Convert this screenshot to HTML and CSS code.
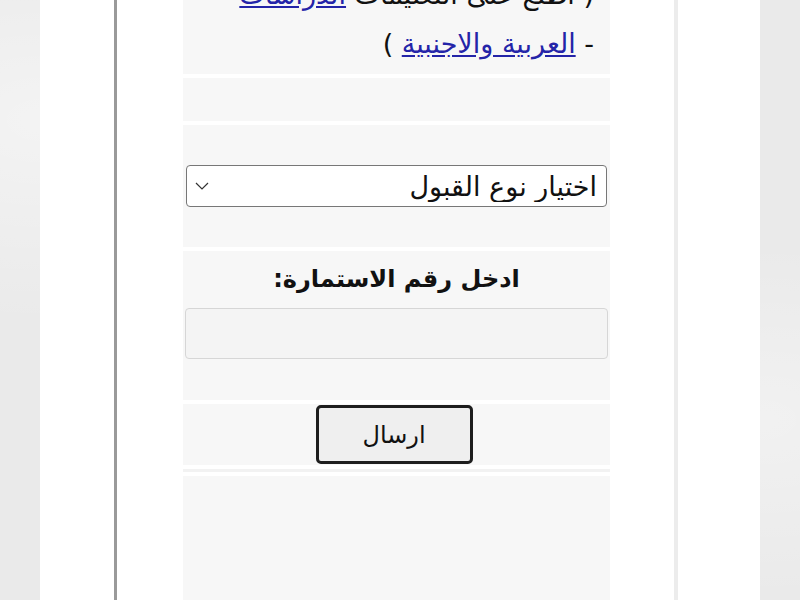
FILE: index.html
```html
<!DOCTYPE html>
<html lang="ar">
<head>
<meta charset="utf-8">
<title>استمارة القبول</title>
<link rel="stylesheet" href="styles.css">
</head>
<body>
<div class="page">
  <div class="frame">
    <div class="col">
      <div class="row intro">
        <p class="note">( اطلع على التعليمات <a href="#">الدراسات</a><br>- <a href="#">العربية والاجنبية</a> )</p>
      </div>
      <div class="row blank"></div>
      <div class="row select-row">
        <div class="select-wrap">
          <select class="select">
            <option>اختيار نوع القبول</option>
          </select>
          <svg class="chev" width="14" height="8" viewBox="0 0 14 8"><path d="M1 1 L7 7 L13 1" fill="none" stroke="#333" stroke-width="1.2"/></svg>
        </div>
      </div>
      <div class="row form-row">
        <label class="label" for="num">ادخل رقم الاستمارة:</label>
        <input class="input" id="num" type="text">
      </div>
      <div class="row btn-row">
        <button class="btn" type="button">ارسال</button>
      </div>
      <div class="sep"></div>
      <div class="row tail"></div>
    </div>
  </div>
</div>
</body>
</html>
```
FILE: styles.css
```css
html, body {
  margin: 0;
  padding: 0;
  height: 600px;
  overflow: hidden;
}
body {
  background-color: #eaeaea;
  background-image:
    radial-gradient(ellipse at 5% 20%, rgba(255,255,255,0.45), transparent 30%),
    radial-gradient(ellipse at 95% 70%, rgba(255,255,255,0.35), transparent 30%);
  font-family: "DejaVu Sans", sans-serif;
}
.page {
  width: 720px;
  height: 600px;
  margin: 0 auto;
  background: #fff;
  display: flex;
  padding-left: 74px;
  box-sizing: border-box;
  overflow: hidden;
}
.frame {
  width: 564px;
  border-left: 3px solid #9a9a9a;
  border-right: 4px solid #ececec;
  box-sizing: border-box;
  display: flex;
}
.col {
  width: 427px;
  margin: -50px 64px 0 66px;
  direction: rtl;
  display: flex;
  flex-direction: column;
  gap: 4px;
}
.row, .sep {
  flex-shrink: 0;
}
.row {
  background: #f7f7f7;
}
.intro {
  padding: 20px 16px 6px 4px;
}
.note {
  margin: 0;
  font-size: 27px;
  line-height: 49px;
  color: #111;
  white-space: nowrap;
}
.note a {
  color: #2424a8;
}
.blank {
  height: 43px;
}
.select-row {
  padding: 40px 3px;
}
.select-wrap {
  position: relative;
}
.select {
  -webkit-appearance: none;
  appearance: none;
  display: block;
  width: 100%;
  height: 42px;
  box-sizing: border-box;
  border: 1px solid #777;
  border-radius: 4px;
  background: #fff;
  font-family: inherit;
  font-size: 27px;
  color: #111;
  padding: 0 9px 0 40px;
  direction: rtl;
}
.chev {
  position: absolute;
  left: 9px;
  top: 17px;
}
.form-row {
  padding: 8px 2px 41px;
  display: flex;
  flex-direction: column;
  align-items: stretch;
}
.label {
  text-align: center;
  font-size: 24px;
  font-weight: bold;
  line-height: 40px;
  color: #111;
  margin-bottom: 9px;
}
.input {
  height: 51px;
  box-sizing: border-box;
  border: 1.5px solid #d6d6d6;
  border-radius: 4px;
  background: #f4f4f4;
  font-size: 20px;
}
.btn-row {
  display: flex;
  justify-content: center;
  padding: 1px 0;
}
.btn {
  width: 157px;
  height: 59px;
  margin-right: 5px;
  border: 3px solid #1e1e1e;
  border-radius: 5px;
  background: #efefef;
  font-family: inherit;
  font-size: 24px;
  color: #111;
}
.sep {
  height: 3px;
  background: #f2f2f2;
}
.tail {
  height: 124px;
}
```
